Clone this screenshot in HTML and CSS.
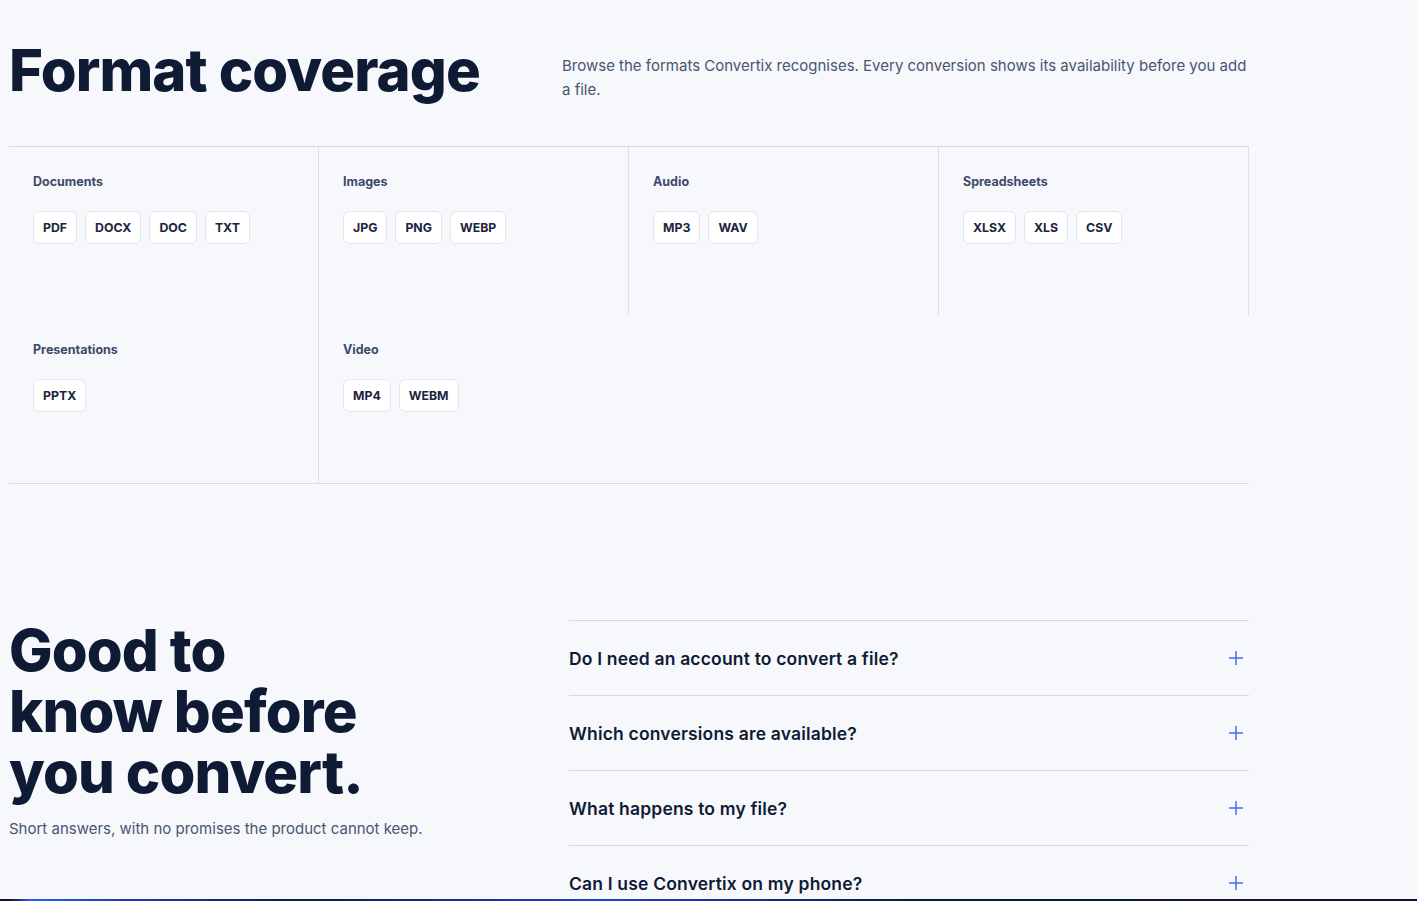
FILE: index.html
```html
<!DOCTYPE html>
<html lang="en">
<head>
<meta charset="utf-8">
<title>Format coverage</title>
<link rel="stylesheet" href="styles.css">
</head>
<body>
<main class="page">
  <section class="hero">
    <h1 class="display">Format coverage</h1>
    <p class="lede">Browse the formats Convertix recognises. Every conversion shows its availability before you add a file.</p>
  </section>

  <section class="formats">
    <div class="cell">
      <h3 class="cell-title">Documents</h3>
      <div class="tags"><span class="tag">PDF</span><span class="tag">DOCX</span><span class="tag">DOC</span><span class="tag">TXT</span></div>
    </div>
    <div class="cell">
      <h3 class="cell-title">Images</h3>
      <div class="tags"><span class="tag">JPG</span><span class="tag">PNG</span><span class="tag">WEBP</span></div>
    </div>
    <div class="cell">
      <h3 class="cell-title">Audio</h3>
      <div class="tags"><span class="tag">MP3</span><span class="tag">WAV</span></div>
    </div>
    <div class="cell">
      <h3 class="cell-title">Spreadsheets</h3>
      <div class="tags"><span class="tag">XLSX</span><span class="tag">XLS</span><span class="tag">CSV</span></div>
    </div>
    <div class="cell">
      <h3 class="cell-title">Presentations</h3>
      <div class="tags"><span class="tag">PPTX</span></div>
    </div>
    <div class="cell">
      <h3 class="cell-title">Video</h3>
      <div class="tags"><span class="tag">MP4</span><span class="tag">WEBM</span></div>
    </div>
  </section>

  <section class="faq">
    <div class="faq-intro">
      <h2 class="display">Good to<br>know before<br>you convert.</h2>
      <p class="faq-sub">Short answers, with no promises the product cannot keep.</p>
    </div>
    <div class="faq-list">
      <div class="faq-item"><span class="q">Do I need an account to convert a file?</span><svg class="plus" viewBox="0 0 14 14"><path d="M7 0v14M0 7h14"/></svg></div>
      <div class="faq-item"><span class="q">Which conversions are available?</span><svg class="plus" viewBox="0 0 14 14"><path d="M7 0v14M0 7h14"/></svg></div>
      <div class="faq-item"><span class="q">What happens to my file?</span><svg class="plus" viewBox="0 0 14 14"><path d="M7 0v14M0 7h14"/></svg></div>
      <div class="faq-item"><span class="q">Can I use Convertix on my phone?</span><svg class="plus" viewBox="0 0 14 14"><path d="M7 0v14M0 7h14"/></svg></div>
    </div>
  </section>
</main>
<div class="bottom-bar"></div>
</body>
</html>
```

FILE: styles.css
```css
* { box-sizing: border-box; }

html, body {
  margin: 0;
  background: #f6f8fc;
  color: #0f1b35;
  font-family: Inter, "Noto Sans", sans-serif;
  overflow: hidden;
}

.page {
  width: 1249px;
  padding: 40px 0 0 9px;
}

.display {
  margin: 0;
  font-weight: 800;
  font-size: 58px;
  line-height: 61px;
  letter-spacing: -0.015em;
  color: #0f1b35;
}

.hero {
  display: grid;
  grid-template-columns: 553px 1fr;
  margin-bottom: 44px;
}

.lede {
  margin: 14px 0 0;
  font-size: 15px;
  line-height: 24px;
  color: #4a5570;
}

.formats {
  display: grid;
  grid-template-columns: repeat(4, 310px);
  border-top: 1px solid #d5d9e8;
  border-bottom: 1px solid #d5d9e8;
}

.cell {
  min-height: 168px;
  padding: 25px 24px 23px;
  border-right: 1px solid #dde1ec;
}

.cell:last-child { border-right: none; }

.cell-title {
  margin: 0 0 20px;
  font-size: 12.5px;
  line-height: 19px;
  font-weight: 700;
  color: #3c4a6a;
}

.tags {
  display: flex;
  gap: 8px;
}

.tag {
  display: inline-flex;
  align-items: center;
  height: 33px;
  padding: 0 9px;
  border: 1px solid #e3e6ef;
  border-radius: 6px;
  background: #ffffff;
  font-size: 12.3px;
  font-weight: 700;
  color: #1b2440;
}

.faq {
  display: grid;
  grid-template-columns: 560px 680px;
  margin-top: 136px;
}

.faq-sub {
  margin: 14px 0 0;
  font-size: 15px;
  line-height: 24px;
  color: #4a5570;
}

.faq-item {
  display: flex;
  align-items: center;
  justify-content: space-between;
  height: 75px;
  padding-right: 6px;
  border-top: 1px solid #d3d8ea;
}

.q {
  font-size: 17.5px;
  font-weight: 600;
  letter-spacing: 0.01em;
  color: #0f1b35;
}

.plus {
  width: 14px;
  height: 14px;
  stroke: #4a6cf0;
  stroke-width: 1.5;
  fill: none;
}

.bottom-bar {
  position: fixed;
  left: 0;
  right: 0;
  bottom: 0;
  height: 2px;
  background: linear-gradient(90deg, #0b1330 0, #0b1330 10px, #2a5fe8 30px, #1a3fb0 120px, #0d1a4a 300px, #1b44c8 600px, #0d1a4a 900px, #0b1330 1417px);
}
```
